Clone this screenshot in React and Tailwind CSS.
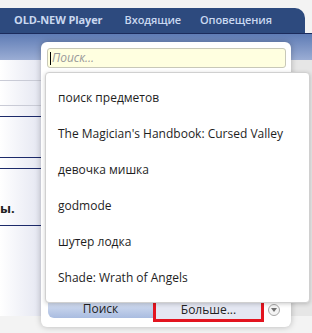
import React from "react";

const items = [
  "поиск предметов",
  "The Magician's Handbook: Cursed Valley",
  "девочка мишка",
  "godmode",
  "шутер лодка",
  "Shade: Wrath of Angels",
];

export default function App() {
  return (
    <div className="relative w-[312px] h-[333px] overflow-hidden bg-[#f3f3f3] font-['Open_Sans',sans-serif]">
      <div className="h-[8px]" />
      <div className="h-[25px] w-[305px] rounded-tr-[10px] bg-[#2d4a7e] flex items-center text-[11px] text-[#c9d8f0] tracking-[-0.1px]">
        <span className="ml-[14px] font-bold">OLD-NEW Player</span>
        <span className="ml-[22px] font-semibold">Входящие</span>
        <span className="ml-[19px] font-semibold">Оповещения</span>
      </div>
      <div className="h-[1px] bg-[#1b2b5c]" />
      <div className="h-[26px] bg-gradient-to-b from-[#5f7cb5] to-[#9badd4]" />
      <div className="flex">
        <div className="w-[42px] flex flex-col bg-gradient-to-r from-white to-[#e4e6f1]">
          <div className="h-[20px]" />
          <div className="h-[1px] bg-[#c9cbd6]" />
          <div className="h-[24px]" />
          <div className="h-[1px] bg-[#c9cbd6]" />
          <div className="h-[10px]" />
          <div className="h-[1px] bg-[#1c2a6a]" />
          <div className="h-[40px]" />
          <div className="h-[1px] bg-[#1c2a6a]" />
          <div className="h-[10px]" />
          <div className="h-[1px] bg-[#1c2a6a]" />
          <div className="h-[56px] flex items-end">
            <span className="text-[13px] font-bold text-[#222] leading-none mb-[10px] ml-0">ы.</span>
          </div>
          <div className="h-[1px] bg-[#1c2a6a]" />
          <div className="h-[90px]" />
        </div>
        <div className="flex-1 bg-[#e6e6e6]" />
      </div>

      {/* popup panel */}
      <div className="absolute left-[41px] top-[42px] w-[250px] h-[285px] bg-white rounded-[6px] shadow-[0_0_6px_rgba(0,0,0,0.25)]">
        <div className="mt-[6px] ml-[6px] w-[239px] h-[20px] rounded-[3px] border border-[#c8c8b8] bg-[#ffffe0] flex items-center">
          <span className="ml-[2px] w-[1px] h-[13px] bg-black" />
          <span className="ml-[1px] text-[12px] italic text-[#9a9a9a]">Поиск...</span>
        </div>
        <div className="absolute left-[7px] top-[258px] w-[105px] h-[18px] rounded-bl-[6px] bg-gradient-to-b from-[#dbe3f3] to-[#a9bce0] flex items-center justify-center text-[12px] text-[#222]">
          Поиск
        </div>
        <div className="absolute left-[112px] top-[255px] w-[111px] h-[25px] border-[3px] border-[#e3141f] bg-[#e4e7f2] flex items-center justify-center text-[12px] text-[#222]">
          Больше...
        </div>
        <div className="absolute left-[227px] top-[262px] w-[12px] h-[12px] rounded-full border border-[#a8a8a8] bg-[#f4f4f4] flex items-center justify-center">
          <svg width="6" height="4" viewBox="0 0 6 4"><path d="M0 0h6L3 4z" fill="#707070" /></svg>
        </div>
      </div>

      {/* dropdown list */}
      <div className="absolute left-[45px] top-[72px] w-[265px] h-[231px] bg-white rounded-[4px] border border-[#d0d0d0] shadow-[0_1px_4px_rgba(0,0,0,0.2)] flex flex-col pt-[7px]">
        {items.map((t) => (
          <div key={t} className="h-[36px] flex items-center pl-[12px] text-[12px] text-[#1e1e1e]">
            {t}
          </div>
        ))}
      </div>
    </div>
  );
}
